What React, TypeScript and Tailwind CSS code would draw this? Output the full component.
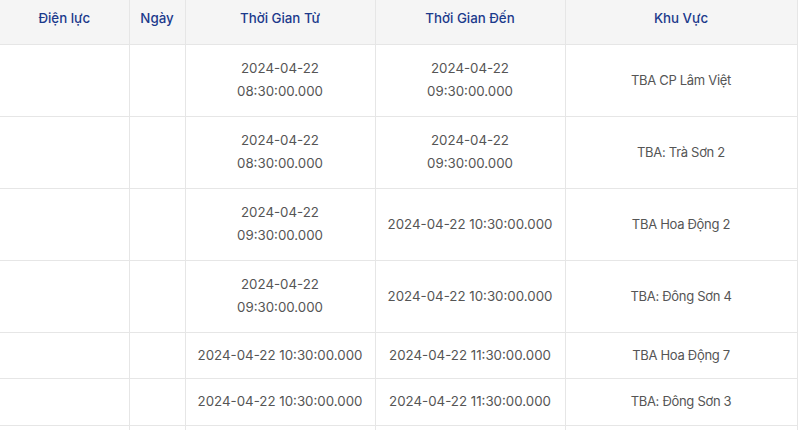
const rows = [
  { from: ["2024-04-22", "08:30:00.000"], to: ["2024-04-22", "09:30:00.000"], area: "TBA CP Lâm Việt" },
  { from: ["2024-04-22", "08:30:00.000"], to: ["2024-04-22", "09:30:00.000"], area: "TBA: Trà Sơn 2" },
  { from: ["2024-04-22", "09:30:00.000"], to: ["2024-04-22 10:30:00.000"], area: "TBA Hoa Động 2" },
  { from: ["2024-04-22", "09:30:00.000"], to: ["2024-04-22 10:30:00.000"], area: "TBA: Đông Sơn 4" },
  { from: ["2024-04-22 10:30:00.000"], to: ["2024-04-22 11:30:00.000"], area: "TBA Hoa Động 7" },
  { from: ["2024-04-22 10:30:00.000"], to: ["2024-04-22 11:30:00.000"], area: "TBA: Đông Sơn 3" },
];

const headers = ["Điện lực", "Ngày", "Thời Gian Từ", "Thời Gian Đến", "Khu Vực"];
const widths = ["w-[129px]", "w-[56px]", "w-[190px]", "w-[190px]", "w-[232px]"];

const Lines = ({ lines }: { lines: string[] }) => (
  <>
    {lines.map((l) => (
      <div key={l}>{l}</div>
    ))}
  </>
);

const cell = "border-r border-b border-[#e6e6e6]";

export default function App() {
  return (
    <div className="w-[800px] h-[430px] overflow-hidden bg-white font-['Inter',sans-serif]">
      <table className="w-[797px] table-fixed border-collapse">
        <thead>
          <tr className="h-[44px] bg-[#f5f5f5]">
            {headers.map((h, i) => (
              <th
                key={h}
                className={`${widths[i]} ${cell} pb-[8px] align-middle text-center text-[13.3px] font-medium leading-[20px] text-[#1b3a8c]`}
              >
                {h}
              </th>
            ))}
          </tr>
        </thead>
        <tbody className="text-[13.3px] leading-[23px] text-[#555555]">
          {rows.map((r, idx) => {
            const tall = r.from.length > 1 || r.to.length > 1;
            return (
              <tr key={idx} className={tall ? "h-[72px]" : "h-[46.5px]"}>
                <td className={cell} />
                <td className={cell} />
                <td className={`${cell} text-center align-middle`}>
                  <Lines lines={r.from} />
                </td>
                <td className={`${cell} text-center align-middle`}>
                  <Lines lines={r.to} />
                </td>
                <td className={`${cell} text-center align-middle text-[13px] tracking-[-0.3px]`}>
                  {r.area}
                </td>
              </tr>
            );
          })}
          <tr className="h-[46.5px]">
            <td className={cell} />
            <td className={cell} />
            <td className={cell} />
            <td className={cell} />
            <td className={cell} />
          </tr>
        </tbody>
      </table>
    </div>
  );
}
